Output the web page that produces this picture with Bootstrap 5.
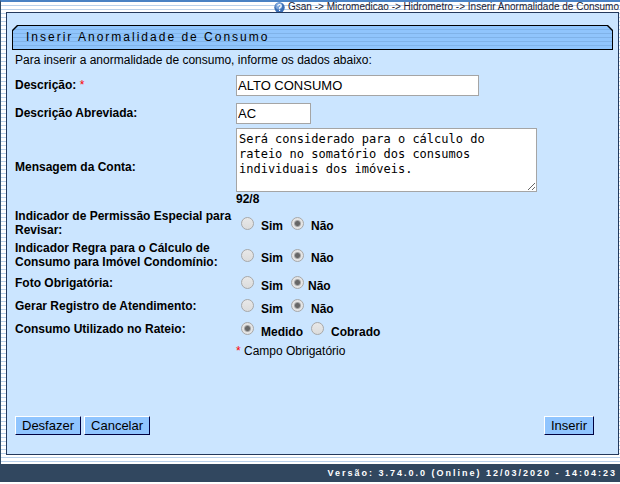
<!DOCTYPE html>
<html lang="pt-BR">
<head>
<meta charset="utf-8">
<meta name="viewport" content="width=device-width, initial-scale=1">
<title>Inserir Anormalidade de Consumo</title>
<link href="https://cdn.jsdelivr.net/npm/bootstrap@5.3.0/dist/css/bootstrap.min.css" rel="stylesheet">
<style>
body {
  font: 12px/14px "Liberation Sans", Arial, sans-serif;
  color: #000;
  padding-bottom: 2px;
}
.stripes {
  background: repeating-linear-gradient(#fff 0 3px, #b9d0ea 3px 4px);
  border-left: 1px solid #2f4a66;
  border-top: 2px solid #4a82c4;
  padding: 0 1px 9px 5px;
}
.trail { font-size: 10px; line-height: 10px; height: 10px; gap: 3px; white-space: nowrap; color: #223; }
.trail svg { width: 11px; height: 11px; }
.panel { background: #cbe5ff; border: 1px solid #24395c; padding: 12px 5px 18px; }
.title-edge {
  background: #000;
  padding: 1px;
  clip-path: polygon(5px 0, calc(100% - 5px) 0, 100% 5px, 100% 100%, 0 100%, 0 5px);
}
.title-face {
  background: repeating-linear-gradient(#90c5fc 0 3px, #80b3e8 3px 4px);
  clip-path: polygon(5px 0, calc(100% - 5px) 0, 100% 5px, 100% 100%, 0 100%, 0 5px);
  font-size: 12px;
  line-height: 23px;
  letter-spacing: 2px;
  padding-left: 13px;
}
.content { padding: 0 19px 0 3px; }
.intro { line-height: 21px; }
.line { min-height: 23px; }
.line-field { min-height: 28px; }
.line-double { min-height: 32px; }
.line-message { min-height: 80px; }
.caption { width: 221px; flex: none; font-weight: bold; }
.req { color: #f00; font-weight: normal; }
.box {
  border: 1px solid #a5a5a5;
  border-radius: 0;
  background: #fff;
  color: #000;
  font-size: 13px;
  line-height: 17px;
  height: 21px;
  padding: 0 1px;
}
.box-long { width: 243px; }
.box-short { width: 75px; }
.box-text {
  width: 301px;
  height: 64px;
  padding: 3px 2px;
  font: 12px/15px "DejaVu Sans Mono", monospace;
  resize: both;
}
.choice input {
  appearance: none;
  width: 13px;
  height: 13px;
  margin: 0 7px 0 5px;
  border: 1px solid #a8a8a8;
  border-radius: 50%;
  background: linear-gradient(#e8e8e8, #dcdcdc);
}
.choice input:checked { background: radial-gradient(circle, #666 0 2px, #e4e4e4 4px); }
.choice label { padding-top: 6px; font-weight: bold; margin-right: 3px; }
.choice .near { margin-right: 4px; }
.push {
  background: #90c5ff;
  color: #000;
  border: 1px solid;
  border-color: #fff #000040 #000040 #fff;
  border-radius: 0;
  font-size: 13px;
  line-height: 17px;
  padding: 0 6px;
}
.actions { margin-top: 54px; gap: 3px; }
.status { background: #31475f; color: #fff; font-size: 9px; line-height: 18px; letter-spacing: 2px; padding-right: 3px; }
</style>
<script src="https://cdn.jsdelivr.net/npm/bootstrap@5.3.0/dist/js/bootstrap.bundle.min.js"></script>
</head>
<body class="d-flex flex-column min-vh-100">
<main class="stripes flex-grow-1 d-flex flex-column">
  <div class="trail d-flex justify-content-end align-items-center">
    <svg viewBox="0 0 11 11" aria-hidden="true"><circle cx="5.5" cy="5.5" r="5.2" fill="#3c6fb5"/><circle cx="4.8" cy="4" r="3.4" fill="#7aa5dc"/><path d="M3.8 4.2Q3.8 2.5 5.5 2.5T7.2 4Q7.2 4.9 5.6 5.8V6.7M5.6 7.8V9" fill="none" stroke="#fff" stroke-width="1.2"/></svg>
    <span>Gsan -&gt; Micromedicao -&gt; Hidrometro -&gt; Inserir Anormalidade de Consumo</span>
  </div>
  <form class="panel flex-grow-1 d-flex flex-column">
    <div class="title-edge"><h1 class="title-face m-0 fw-normal">Inserir Anormalidade de Consumo</h1></div>
    <div class="content flex-grow-1 d-flex flex-column">
      <p class="intro m-0">Para inserir a anormalidade de consumo, informe os dados abaixo:</p>
      <div class="line-field d-flex align-items-center">
        <label class="caption" for="desc">Descrição: <span class="req">*</span></label>
        <input class="box box-long" id="desc" type="text" value="ALTO CONSUMO">
      </div>
      <div class="line-field d-flex align-items-center">
        <label class="caption" for="abrev">Descrição Abreviada:</label>
        <input class="box box-short" id="abrev" type="text" value="AC">
      </div>
      <div class="line-message d-flex align-items-center">
        <label class="caption" for="msg">Mensagem da Conta:</label>
        <div>
          <textarea class="box box-text d-block" id="msg">Será considerado para o cálculo do
rateio no somatório dos consumos
individuais dos imóveis.</textarea>
          <div class="fw-bold">92/8</div>
        </div>
      </div>
      <div class="line-double d-flex align-items-center" role="radiogroup" aria-labelledby="g1">
        <span class="caption" id="g1">Indicador de Permissão Especial para Revisar:</span>
        <div class="choice d-flex align-items-center">
          <input type="radio" name="permissao" id="p1"><label for="p1">Sim</label>
          <input type="radio" name="permissao" id="p2" checked><label for="p2">Não</label>
        </div>
      </div>
      <div class="line-double d-flex align-items-center" role="radiogroup" aria-labelledby="g2">
        <span class="caption" id="g2">Indicador Regra para o Cálculo de Consumo para Imóvel Condomínio:</span>
        <div class="choice d-flex align-items-center">
          <input type="radio" name="regra" id="r1"><label for="r1">Sim</label>
          <input type="radio" name="regra" id="r2" checked><label for="r2">Não</label>
        </div>
      </div>
      <div class="line d-flex align-items-center" role="radiogroup" aria-labelledby="g3">
        <span class="caption" id="g3">Foto Obrigatória:</span>
        <div class="choice d-flex align-items-center">
          <input type="radio" name="foto" id="f1"><label for="f1">Sim</label>
          <input class="near" type="radio" name="foto" id="f2" checked><label for="f2">Não</label>
        </div>
      </div>
      <div class="line d-flex align-items-center" role="radiogroup" aria-labelledby="g4">
        <span class="caption" id="g4">Gerar Registro de Atendimento:</span>
        <div class="choice d-flex align-items-center">
          <input type="radio" name="registro" id="a1"><label for="a1">Sim</label>
          <input type="radio" name="registro" id="a2" checked><label for="a2">Não</label>
        </div>
      </div>
      <div class="line d-flex align-items-center" role="radiogroup" aria-labelledby="g5">
        <span class="caption" id="g5">Consumo Utilizado no Rateio:</span>
        <div class="choice d-flex align-items-center">
          <input type="radio" name="rateio" id="c1" checked><label for="c1">Medido</label>
          <input type="radio" name="rateio" id="c2"><label for="c2">Cobrado</label>
        </div>
      </div>
      <div class="d-flex py-1">
        <span class="caption"></span>
        <span><span class="req">*</span> Campo Obrigatório</span>
      </div>
      <div class="actions d-flex">
        <button class="push" type="reset">Desfazer</button>
        <button class="push" type="button">Cancelar</button>
        <button class="push ms-auto" type="submit">Inserir</button>
      </div>
    </div>
  </form>
</main>
<footer class="status text-end fw-bold">Versão: 3.74.0.0 (Online) 12/03/2020 - 14:04:23</footer>
</body>
</html>
